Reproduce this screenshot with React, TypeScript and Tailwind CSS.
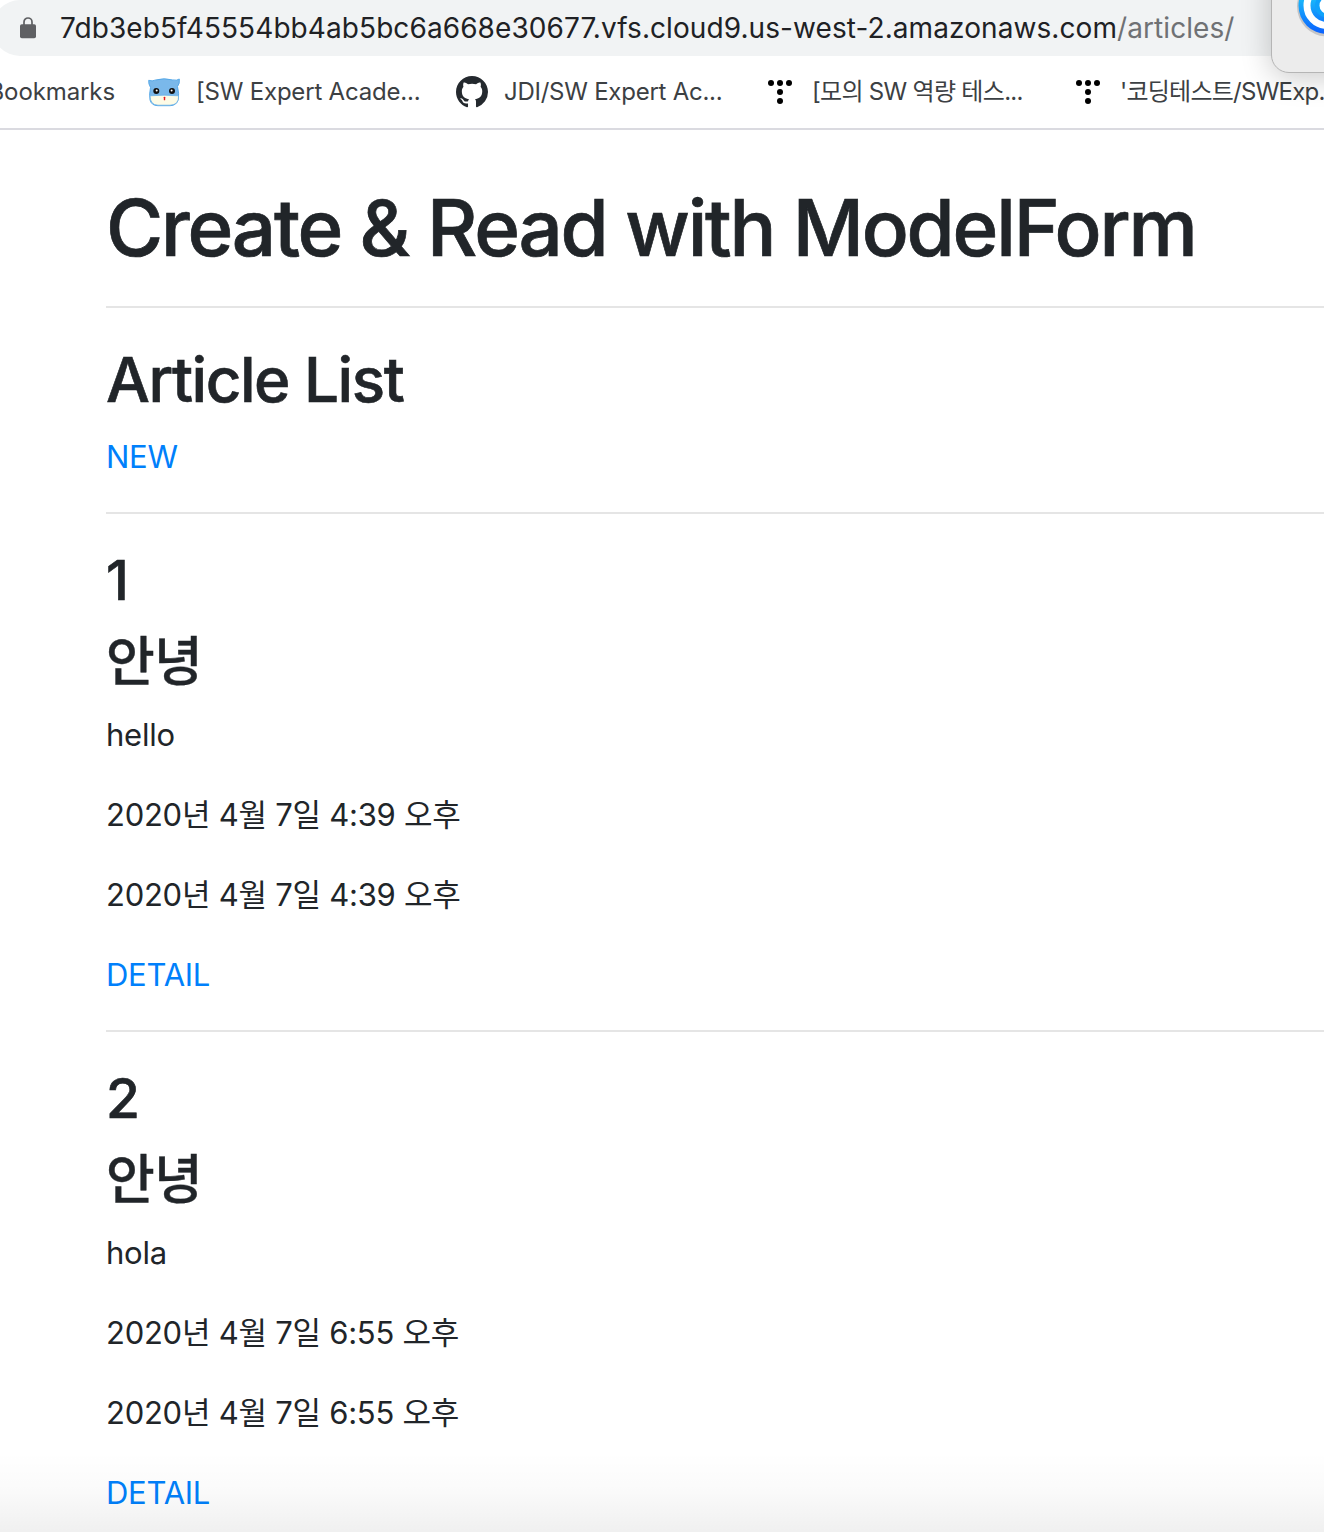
import type { ReactNode } from "react";

const articles = [
  { id: 1, title: "안녕", content: "hello", time: "2020년 4월 7일 4:39 오후" },
  { id: 2, title: "안녕", content: "hola", time: "2020년 4월 7일 6:55 오후" },
];

function LockIcon() {
  return (
    <svg width="16" height="22" viewBox="0 0 16 22" className="shrink-0">
      <path d="M4 8V5a4 4 0 0 1 8 0v3" fill="none" stroke="#5f6063" strokeWidth="1.7" />
      <rect x="0" y="7.3" width="16" height="14" rx="1.8" fill="#5f6063" />
    </svg>
  );
}

function CatIcon() {
  return (
    <svg width="32" height="32" viewBox="0 0 32 32" className="shrink-0">
      <path
        d="M.7 4.3Q4 5.6 8 3.9Q16 1.600 24.5 3.900Q29 4.800 31.300 3Q32 7.500 29.500 10.500Q31.300 18 30.300 23.500Q28.500 29.700 22 29.700H10Q3.500 29.700 2 24Q1 18 2.500 11.500Q.2 7.500 .7 4.300Z"
        fill="#7ab8ea"
        stroke="#4fa5e6"
        strokeWidth="0.9"
      />
      <path d="M2 19.800Q16 18.500 30.600 19.800Q31 28.900 22 29.200H10Q2.200 29 2 19.800Z" fill="#fdfbe6" stroke="#63aee6" strokeWidth="0.7" />
      <circle cx="8.300" cy="15" r="3" fill="#111" />
      <circle cx="24" cy="15" r="3" fill="#111" />
      <circle cx="8.700" cy="14.600" r="1" fill="#fff" />
      <circle cx="23.600" cy="14.600" r="1" fill="#fff" />
      <rect x="15.800" y="20.700" width="1.400" height="3.600" rx="0.600" fill="#e5171d" />
    </svg>
  );
}

function GithubIcon() {
  return (
    <svg width="32" height="32" viewBox="0 0 16 16" className="shrink-0">
      <path
        fill="#24292e"
        d="M8 0C3.580 0 0 3.580 0 8c0 3.540 2.290 6.530 5.470 7.590.4.070.55-.17.55-.38 0-.19-.01-.82-.01-1.490-2.010.37-2.530-.49-2.690-.94-.09-.23-.48-.94-.82-1.130-.28-.15-.68-.52-.01-.53.63-.01 1.080.58 1.230.82.72 1.210 1.870.87 2.330.66.07-.52.28-.87.51-1.070-1.780-.2-3.640-.89-3.640-3.950 0-.87.31-1.590.82-2.150-.08-.2-.36-1.020.08-2.120 0 0 .67-.21 2.200.82.64-.18 1.320-.27 2-.27s1.360.09 2 .27c1.530-1.040 2.200-.82 2.200-.82.44 1.100.16 1.920.08 2.120.51.56.82 1.270.82 2.150 0 3.070-1.870 3.750-3.650 3.950.29.25.54.73.54 1.480 0 1.070-.01 1.930-.01 2.200 0 .21.15.46.55.38A8.010 8.010 0 0 0 16 8c0-4.420-3.580-8-8-8z"
      />
    </svg>
  );
}

function DotsIcon() {
  return (
    <svg width="24" height="26" viewBox="0 0 24 26" className="shrink-0">
      <circle cx="3" cy="4" r="3" />
      <circle cx="12" cy="4" r="3" />
      <circle cx="21" cy="4" r="3" />
      <circle cx="12" cy="13" r="3" />
      <circle cx="12" cy="22" r="3" />
    </svg>
  );
}

function Bookmark({ icon, className, children }: { icon: ReactNode; className: string; children: ReactNode }) {
  return (
    <div className={"flex shrink-0 items-center whitespace-pre " + className}>
      {icon}
      <span className="leading-[32px]">{children}</span>
    </div>
  );
}

function Rule() {
  return <hr className="my-8 h-0.5 border-0 bg-[#e5e5e5]" />;
}

export default function App() {
  return (
    <div className="relative h-[1532px] w-[1324px] overflow-hidden bg-white font-['Inter','Noto_Sans_CJK_KR',sans-serif] text-[#212529]">
      <header className="h-[130px] border-b-2 border-[#dadae0]">
        <div className="-ml-2 flex h-14 items-center rounded-l-[28px] bg-[#f1f3f4] pl-7 whitespace-nowrap">
          <LockIcon />
          <div className="ml-6 text-[28px] leading-[56px] tracking-[0.08px] text-[#202124]">
            <span>7db3eb5f45554bb4ab5bc6a668e30677.vfs.cloud9.us-west-2.amazonaws.com</span>
            <span className="text-[#6f7174]">/articles/</span>
          </div>
        </div>
        <div className="flex h-[72px] items-center text-[24px] text-[#3c4043]">
          <div className="flex w-[115px] shrink-0 justify-end">
            <span className="tracking-[-0.1px]">Bookmarks</span>
          </div>
          <Bookmark className="ml-[33px] w-[308px] gap-[16px] tracking-[-0.2px]" icon={<CatIcon />}>
            [SW Expert Acade...
          </Bookmark>
          <Bookmark className="w-[312px] gap-4 tracking-[-0.25px]" icon={<GithubIcon />}>
            JDI/SW Expert Ac...
          </Bookmark>
          <Bookmark className="w-[308px] gap-[20px] tracking-[-0.7px]" icon={<DotsIcon />}>
            [모의 SW 역량 테스...
          </Bookmark>
          <Bookmark className="gap-[20px] tracking-[-0.75px]" icon={<DotsIcon />}>
            '코딩테스트/SWExp...
          </Bookmark>
        </div>
      </header>

      <main className="ml-[106px] pt-12 text-[31px] leading-[50px] tracking-[-0.25px] whitespace-nowrap">
        <h1 className="h-24 text-[78px] leading-[100px] font-medium tracking-[-2.22px] [-webkit-text-stroke:0.7px_#212529]">
          Create &amp; Read with ModelForm
        </h1>
        <Rule />
        <h2 className="mb-4 h-[76px] text-[62px] leading-[80px] font-medium tracking-[-1.5px] [-webkit-text-stroke:0.6px_#212529]">
          Article List
        </h2>
        <a className="block h-12 text-[#0080fb]">NEW</a>
        {articles.map((a) => (
          <article key={a.id}>
            <Rule />
            <h3 className="mb-4 h-[66px] text-[55px] leading-[68px] font-medium [-webkit-text-stroke:0.6px_#212529]">{a.id}</h3>
            <h3 className="mb-4 h-[66px] text-[53px] leading-[69px] font-medium tracking-[-0.8px] [-webkit-text-stroke:0.4px_#212529]">
              {a.title}
            </h3>
            <p className="mb-8 h-12">{a.content}</p>
            <p className="mb-8 h-12">{a.time}</p>
            <p className="mb-8 h-12">{a.time}</p>
            <a className="block h-12 text-[#0080fb]">DETAIL</a>
          </article>
        ))}
      </main>

      <div className="pointer-events-none absolute inset-x-0 bottom-0 h-20 bg-linear-to-b from-black/0 via-black/2 to-black/6" />

      <div className="absolute -top-10 left-[1271px] h-[113px] w-32 rounded-[18px] border border-[#b5b5b5] bg-[#ececec] shadow-[0_4px_30px_rgba(0,0,0,0.22)]">
        <svg width="70" height="70" viewBox="0 0 70 70" className="absolute top-[14px] left-[25px]">
          <defs>
            <linearGradient id="badge" x1="0" y1="0" x2="0" y2="1">
              <stop offset="0.4" stopColor="#19b5fa" />
              <stop offset="1" stopColor="#0a60ff" />
            </linearGradient>
          </defs>
          <circle cx="30" cy="31.5" r="30" fill="#c4c4c6" />
          <circle cx="30" cy="30.5" r="28.500" fill="url(#badge)" />
          <circle cx="30" cy="30.5" r="20" fill="none" stroke="#fff" strokeWidth="7" />
          <circle cx="30" cy="30.5" r="12" fill="#10a2fb" />
          <circle cx="31" cy="30.5" r="8.500" fill="#fff" />
        </svg>
      </div>
    </div>
  );
}
